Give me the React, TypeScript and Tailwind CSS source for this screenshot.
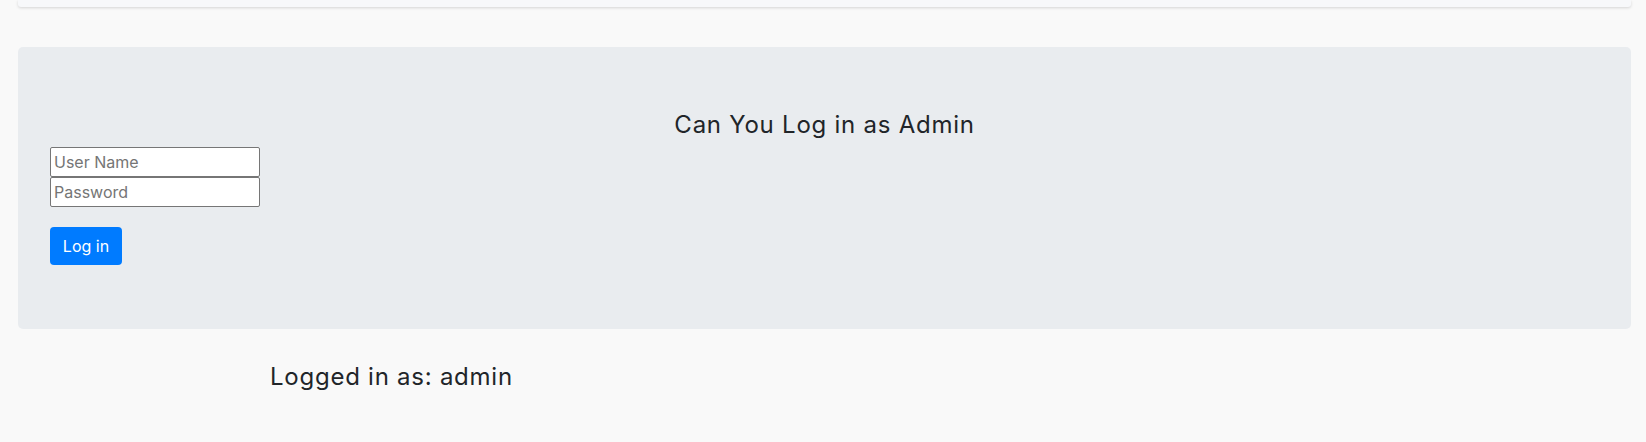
export default function App() {
  return (
    <div className="min-h-[442px] w-full bg-[#f9f9f9] text-[#212529]" style={{ fontFamily: 'Inter, "Noto Sans", sans-serif' }}>
      <div className="px-[18px] pr-[15px]">
        <div className="h-[7px] rounded-b-[3px] bg-[#f7f8fa] shadow-[0_1px_3px_rgba(0,0,0,0.15)]" />
        <div className="mt-[40px] rounded-[5px] bg-[#e9ecef] px-[32px] pt-[63px] pb-[64px]">
          <h4 className="mb-[8px] text-center text-[24px] leading-[29px] font-normal tracking-[0.75px]">Can You Log in as Admin</h4>
          <div className="flex flex-col">
            <input
              placeholder="User Name"
              className="h-[30px] w-[210px] rounded-[2px] border border-[#767676] bg-white px-[3px] text-[16px] placeholder:text-[#757575]"
            />
            <input
              placeholder="Password"
              className="h-[30px] w-[210px] rounded-[2px] border border-[#767676] bg-white px-[3px] text-[16px] placeholder:text-[#757575]"
            />
          </div>
          <button className="mt-[20px] h-[38px] w-[72px] rounded-[4px] bg-[#007bff] text-[16px] text-white">Log in</button>
        </div>
        <div className="mt-[33px] pl-[252px] text-[24px] leading-[29px] tracking-[0.75px]">Logged in as: admin</div>
      </div>
    </div>
  );
}
